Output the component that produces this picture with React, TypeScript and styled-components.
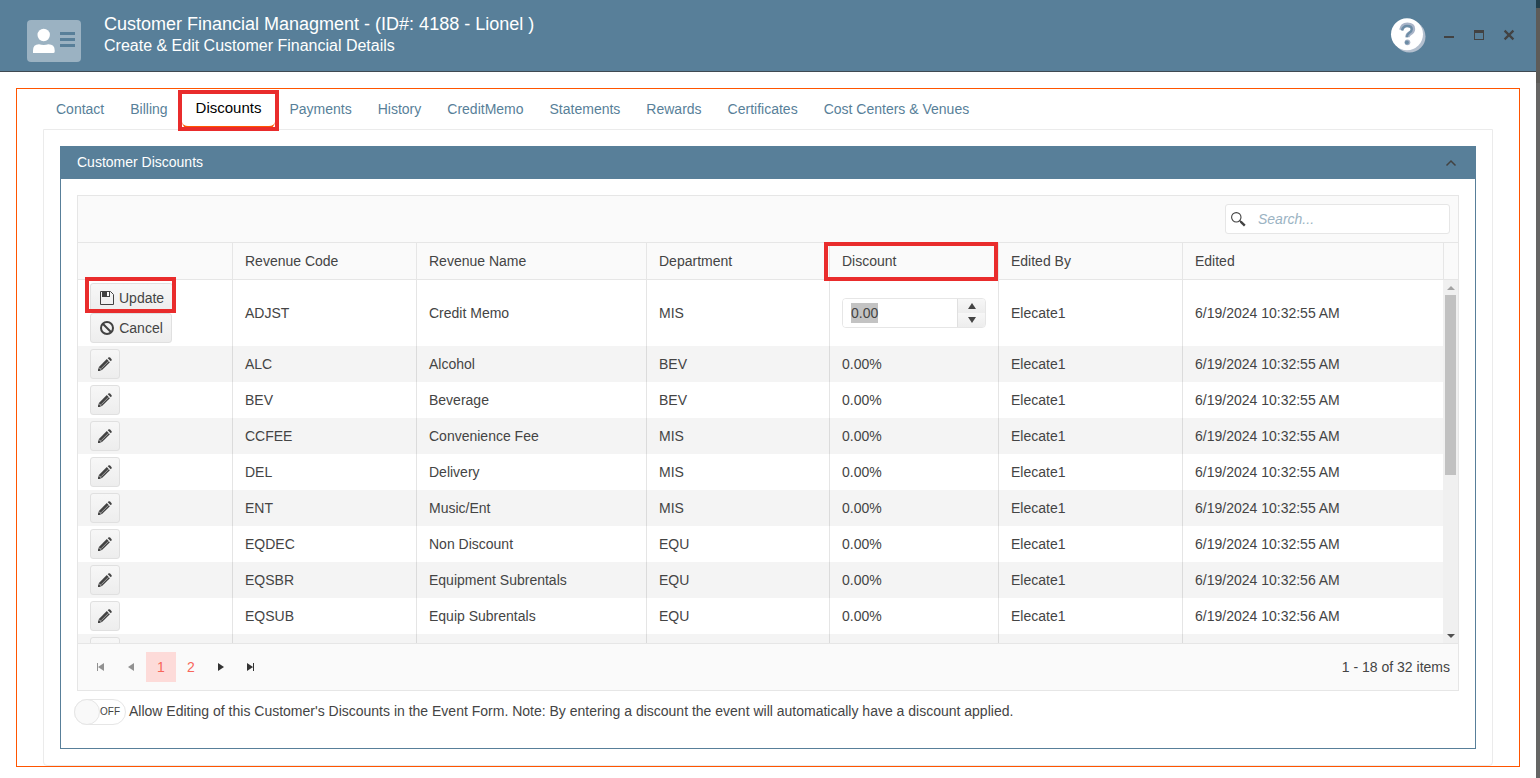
import React, { useEffect, useRef } from "react";
import styled, { createGlobalStyle, css } from "styled-components";

const steel = "#587f99";
const line = "#e6e6e6";
const ink = "#444444";
const accent = "#ff5500";
const marker = "#e92c2c";

const GlobalStyle = createGlobalStyle`
  * { box-sizing: border-box; }
  html, body { margin: 0; padding: 0; }
  body {
    background: #656564;
    color: ${ink};
    font-family: "Liberation Sans", Arial, Helvetica, sans-serif;
    font-size: 14px;
    line-height: 20px;
  }
  button, input { font: inherit; color: inherit; margin: 0; }
`;

const Backdrop = styled.div`
  padding-right: 4px;
  background: linear-gradient(#24404d 0 8px, #5d5b58 8px 83px, #666564 83px);
`;

const Dialog = styled.main`
  min-height: 100vh;
  background: #fff;
`;

const TitleBar = styled.header`
  display: flex;
  align-items: flex-start;
  min-height: 72px;
  padding: 14px 12px 9px 27px;
  background: ${steel};
  border-bottom: 1px solid #3f4a52;
  color: #fff;
`;

const BadgeIcon = styled.svg`
  flex: none;
  margin-top: 6px;
  margin-right: 23px;
`;

const TitleText = styled.div`
  flex: 1;
`;

const Title = styled.h1`
  margin: 0;
  font-size: 18px;
  font-weight: 400;
  line-height: 21px;
`;

const Subtitle = styled.p`
  margin: 0;
  font-size: 16px;
  line-height: 21px;
`;

const WindowActions = styled.div`
  display: flex;
  align-items: center;
  height: 42px;
`;

const IconButton = styled.button`
  display: flex;
  align-items: center;
  justify-content: center;
  width: 30px;
  height: 30px;
  padding: 0;
  border: 0;
  background: none;
  color: #424242;
`;

const HelpButton = styled(IconButton)`
  width: 36px;
  height: 36px;
  margin-right: 8px;
`;

const Content = styled.div`
  padding: 16px 16px 11px;
`;

const Frame = styled.section`
  border: 1px solid ${accent};
  padding: 0 26px;
`;

const Tabs = styled.nav`
  display: flex;
  align-items: center;
  height: 40px;
`;

const Tab = styled.button<{ $active?: boolean }>`
  position: relative;
  height: 38px;
  padding: 0 13px;
  border: 0;
  background: none;
  color: ${(p) => (p.$active ? "#000" : steel)};
  ${(p) =>
    p.$active &&
    css`
      margin: 0 1px;
      padding: 0 14px;
      border: solid ${accent};
      border-width: 0 0 2px;
      border-radius: 6px;
      font-size: 15px;
    `}
`;

const Highlight = styled.span<{ $inset: string }>`
  position: absolute;
  inset: ${(p) => p.$inset};
  z-index: 2;
  border: 4px solid ${marker};
  pointer-events: none;
`;

const TabBody = styled.div`
  padding: 16px;
  border: 1px solid #ebebeb;
  border-radius: 0 0 4px 4px;
`;

const Panel = styled.section`
  border: 1px solid ${steel};
`;

const PanelHeader = styled.header`
  display: flex;
  align-items: center;
  justify-content: space-between;
  height: 32px;
  padding: 0 9px 0 16px;
  background: ${steel};
  color: #fff;
`;

const PanelTitle = styled.h2`
  margin: 0;
  padding-bottom: 2px;
  font-size: 14px;
  font-weight: 400;
`;

const PanelBody = styled.div`
  padding: 16px 16px 23px;
`;

const Grid = styled.div`
  border: 1px solid ${line};
`;

const Toolbar = styled.div`
  display: flex;
  justify-content: flex-end;
  padding: 8px;
  background: #fafafa;
`;

const SearchBox = styled.label`
  display: flex;
  align-items: center;
  gap: 12px;
  width: 225px;
  height: 30px;
  padding: 0 5px;
  border: 1px solid ${line};
  border-radius: 3px;
  background: #fff;
`;

const SearchInput = styled.input`
  flex: 1;
  min-width: 0;
  padding: 0;
  border: 0;
  outline: 0;
  background: none;
  &::placeholder {
    color: #9bb3c3;
    font-style: italic;
    opacity: 1;
  }
`;

const Viewport = styled.div`
  display: flex;
  height: 401px;
`;

const TableClip = styled.div`
  flex: 1;
  overflow: hidden;
`;

const Table = styled.table`
  width: 100%;
  table-layout: fixed;
  border-collapse: separate;
  border-spacing: 0;
`;

const HeadCell = styled.th`
  position: relative;
  height: 38px;
  padding: 0 12px;
  border: solid ${line};
  border-width: 1px 0 1px 1px;
  background: #fafafa;
  font-weight: 400;
  text-align: left;
  &:first-child {
    border-left: 0;
  }
`;

const Row = styled.tr<{ $striped?: boolean }>`
  background: ${(p) => (p.$striped ? "#f4f4f4" : "#fff")};
`;

const Cell = styled.td`
  height: 36px;
  padding: 3px 12px;
  border-left: 1px solid rgba(0, 0, 0, 0.1);
  white-space: nowrap;
  &:first-child {
    border-left: 0;
  }
`;

const CommandStack = styled.div`
  display: flex;
  flex-direction: column;
  align-items: flex-start;
`;

const CommandSlot = styled.div`
  position: relative;
`;

const Command = styled.button<{ $square?: boolean }>`
  display: flex;
  align-items: center;
  justify-content: center;
  gap: 4px;
  min-width: ${(p) => (p.$square ? "30px" : "82px")};
  height: 30px;
  padding: ${(p) => (p.$square ? "0" : "0 8px")};
  border: 1px solid #e0e0e0;
  border-radius: 3px;
  background: linear-gradient(#f7f7f7, #ededed);
`;

const Numeric = styled.div`
  display: flex;
  height: 30px;
  border: 1px solid ${line};
  border-radius: 4px;
  overflow: hidden;
  background: #fff;
`;

const NumericInput = styled.input`
  flex: 1;
  min-width: 0;
  padding: 4px 8px;
  border: 0;
  outline: 0;
  line-height: 20px;
  &::selection {
    background: #c3c3c3;
    color: ${ink};
  }
`;

const Steppers = styled.div`
  display: flex;
  flex-direction: column;
  width: 28px;
  border-left: 1px solid #e0e0e0;
`;

const Stepper = styled.button`
  display: flex;
  flex: 1;
  align-items: center;
  justify-content: center;
  padding: 0;
  border: 0;
  background: linear-gradient(#f7f7f7, #ededed);
`;

const ScrollColumn = styled.div`
  display: flex;
  flex-direction: column;
  width: 15px;
`;

const ScrollHead = styled.div`
  height: 38px;
  border: solid ${line};
  border-width: 1px 0 1px 1px;
  background: #fafafa;
`;

const Track = styled.div`
  display: flex;
  flex: 1;
  flex-direction: column;
  align-items: center;
  background: #f0f0f0;
`;

const TrackArrow = styled.span`
  display: flex;
  align-items: center;
  justify-content: center;
  height: 15px;
`;

const TrackRun = styled.div`
  flex: 1;
  width: 11px;
`;

const Thumb = styled.div`
  height: 54%;
  background: #c1c1c1;
`;

const Pager = styled.footer`
  display: flex;
  align-items: center;
  justify-content: space-between;
  padding: 8px;
  border-top: 1px solid ${line};
  background: #fafafa;
`;

const PageList = styled.div`
  display: flex;
`;

const PageButton = styled.button<{ $current?: boolean; $dim?: boolean }>`
  display: flex;
  align-items: center;
  justify-content: center;
  width: 30px;
  height: 30px;
  padding: 0;
  border: 0;
  background: ${(p) => (p.$current ? "#fddbd9" : "none")};
  color: ${(p) => (p.$dim ? "#919191" : "#333")};
`;

const PageNumber = styled(PageButton)`
  color: #f8665a;
`;

const SwitchRow = styled.label`
  display: flex;
  align-items: center;
  gap: 3px;
  margin: 8px 0 0 -3px;
`;

const Switch = styled.span`
  position: relative;
  display: flex;
  align-items: center;
  flex: none;
  width: 52px;
  height: 26px;
  border: 1px solid ${line};
  border-radius: 13px;
  background: #fff;
`;

const SwitchInput = styled.input`
  position: absolute;
  inset: 0;
  width: 100%;
  height: 100%;
  opacity: 0;
`;

const Knob = styled.span`
  width: 26px;
  height: 26px;
  margin-left: -1px;
  border: 1px solid ${line};
  border-radius: 50%;
  background: #f9f9f9;
`;

const SwitchState = styled.span`
  font-size: 10px;
  line-height: 16px;
`;

const SwitchText = styled.span`
  padding-bottom: 2px;
`;

const PencilIcon = () => (
  <svg width="16" height="16" viewBox="0 0 16 16" aria-hidden="true">
    <path d="M1 15l.9-4L9.800 3.100l3.100 3.100L5 14.100z" fill="#424242" />
    <path d="M10.700 2.200l.7-.7q.8-.7 1.700.1l1.300 1.300q.8.900.1 1.700l-.7.7z" fill="#424242" />
    <path d="M4.200 12.600l7.500-7.500" stroke="#a8a8a8" strokeWidth="1" />
    <path d="M2.500 11.200l2.300 2.300-1.700.4-1-1z" fill="#9a9a9a" />
    <path d="M1 15l.6-2.600 2 2z" fill="#333" />
  </svg>
);

const SaveIcon = () => (
  <svg width="16" height="16" viewBox="0 0 16 16" fill="none" aria-hidden="true">
    <path d="M1.5 1.5h10l3 3v10h-13z" stroke="#424242" />
    <path d="M3 1h8v6H3z" fill="#424242" />
    <path d="M8 2h2v4H8z" fill="#fff" />
  </svg>
);

const CancelIcon = () => (
  <svg width="16" height="16" viewBox="0 0 16 16" fill="none" stroke="#424242" strokeWidth="2" aria-hidden="true">
    <circle cx="8" cy="8" r="6" />
    <path d="M3.8 3.8l8.4 8.4" />
  </svg>
);

const SearchIcon = () => (
  <svg width="15" height="15" viewBox="0 0 15 15" fill="none" stroke="#424242" aria-hidden="true">
    <circle cx="5.3" cy="5.3" r="4.7" strokeWidth="1.1" />
    <path d="M8.6 8.6l1.5 1.5" strokeWidth="1.4" />
    <path d="M9.7 9.7l4.1 4" strokeWidth="2.4" />
  </svg>
);

const Triangle = ({ d, w = 16, h = 16 }: { d: string; w?: number; h?: number }) => (
  <svg width={w} height={h} viewBox={`0 0 ${w} ${h}`} fill="currentColor" aria-hidden="true">
    <path d={d} />
  </svg>
);

const tabs = [
  "Contact",
  "Billing",
  "Discounts",
  "Payments",
  "History",
  "CreditMemo",
  "Statements",
  "Rewards",
  "Certificates",
  "Cost Centers & Venues",
];

const columns = [
  { name: "", width: 154 },
  { name: "Revenue Code", width: 184 },
  { name: "Revenue Name", width: 230 },
  { name: "Department", width: 183 },
  { name: "Discount", width: 169 },
  { name: "Edited By", width: 184 },
  { name: "Edited" },
];

const rows = [
  ["ALC", "Alcohol", "BEV", "0.00%", "Elecate1", "6/19/2024 10:32:55 AM"],
  ["BEV", "Beverage", "BEV", "0.00%", "Elecate1", "6/19/2024 10:32:55 AM"],
  ["CCFEE", "Convenience Fee", "MIS", "0.00%", "Elecate1", "6/19/2024 10:32:55 AM"],
  ["DEL", "Delivery", "MIS", "0.00%", "Elecate1", "6/19/2024 10:32:55 AM"],
  ["ENT", "Music/Ent", "MIS", "0.00%", "Elecate1", "6/19/2024 10:32:55 AM"],
  ["EQDEC", "Non Discount", "EQU", "0.00%", "Elecate1", "6/19/2024 10:32:55 AM"],
  ["EQSBR", "Equipment Subrentals", "EQU", "0.00%", "Elecate1", "6/19/2024 10:32:56 AM"],
  ["EQSUB", "Equip Subrentals", "EQU", "0.00%", "Elecate1", "6/19/2024 10:32:56 AM"],
  ["", "", "", "", "", ""],
];

const EditRow = () => {
  const field = useRef<HTMLInputElement>(null);
  useEffect(() => {
    field.current?.focus();
    field.current?.select();
  }, []);
  return (
    <Row>
      <Cell>
        <CommandStack>
          <CommandSlot>
            <Command type="button">
              <SaveIcon />
              Update
            </Command>
            <Highlight $inset="-6px -3px 0 -5px" />
          </CommandSlot>
          <Command type="button">
            <CancelIcon />
            Cancel
          </Command>
        </CommandStack>
      </Cell>
      <Cell>ADJST</Cell>
      <Cell>Credit Memo</Cell>
      <Cell>MIS</Cell>
      <Cell>
        <Numeric>
          <NumericInput ref={field} defaultValue="0.00" aria-label="Discount" />
          <Steppers>
            <Stepper type="button" aria-label="Increase value">
              <Triangle d="M4 0l4 6H0z" w={8} h={6} />
            </Stepper>
            <Stepper type="button" aria-label="Decrease value">
              <Triangle d="M0 0h8L4 6z" w={8} h={6} />
            </Stepper>
          </Steppers>
        </Numeric>
      </Cell>
      <Cell>Elecate1</Cell>
      <Cell>6/19/2024 10:32:55 AM</Cell>
    </Row>
  );
};

export default function App() {
  return (
    <Backdrop>
      <GlobalStyle />
      <Dialog>
        <TitleBar>
          <BadgeIcon width="54" height="42" viewBox="0 0 54 42" aria-hidden="true">
            <rect width="54" height="42" rx="4" fill="#9bb2c2" />
            <circle cx="16.7" cy="15" r="6.2" fill="#fff" />
            <path d="M6 33v-2.5q0-6.3 6-6.3 4.7 1.6 9.400 0 6.3 0 6.3 6.3V31.5q0 1.5-1.500 1.500z" fill="#fff" />
            <path d="M33 13.5h15M33 19.5h15M33 25.5h15" stroke={steel} strokeWidth="3" />
          </BadgeIcon>
          <TitleText>
            <Title>Customer Financial Managment - (ID#: 4188 - Lionel )</Title>
            <Subtitle>Create &amp; Edit Customer Financial Details</Subtitle>
          </TitleText>
          <WindowActions>
            <HelpButton type="button" aria-label="Help">
              <svg width="36" height="36" viewBox="0 0 36 36" fill="none" aria-hidden="true">
                <circle cx="19.5" cy="19.5" r="16" fill="#b3bfce" />
                <circle cx="17" cy="17.3" r="16" fill="#fff" />
                <path d="M11.3 13q1-5.300 6-5.300 5.700 0 5.700 4.300 0 2.600-3 4.200-2.600 1.400-2.600 4" stroke="#a9b4c8" strokeWidth="4.400" />
                <path d="M12 13.600q1-4.600 5-4.600 4.800 0 4.800 3.200 0 2.200-2.700 3.800-2.200 1.400-2.200 4.200" stroke="#6d8da6" strokeWidth="2.400" />
                <circle cx="17.4" cy="25.300" r="2.900" fill="#a9b4c8" />
                <circle cx="16.9" cy="25.600" r="2" fill="#6d8da6" />
              </svg>
            </HelpButton>
            <IconButton type="button" aria-label="Minimize">
              <Triangle d="M3 9h10v2H3z" />
            </IconButton>
            <IconButton type="button" aria-label="Maximize">
              <Triangle d="M3 3h10v10H3zM4 6v6h8V6z" />
            </IconButton>
            <IconButton type="button" aria-label="Close">
              <svg width="16" height="16" viewBox="0 0 16 16" stroke="currentColor" strokeWidth="2.2" aria-hidden="true">
                <path d="M3.6 3.6l8.8 8.8M12.4 3.6l-8.8 8.8" />
              </svg>
            </IconButton>
          </WindowActions>
        </TitleBar>
        <Content>
          <Frame>
            <Tabs>
              {tabs.map((name) => (
                <Tab key={name} type="button" $active={name === "Discounts"}>
                  {name}
                  {name === "Discounts" && <Highlight $inset="0 -4px -5px -4px" />}
                </Tab>
              ))}
            </Tabs>
            <TabBody>
              <Panel>
                <PanelHeader>
                  <PanelTitle>Customer Discounts</PanelTitle>
                  <IconButton type="button" aria-label="Collapse panel">
                    <svg width="16" height="16" viewBox="0 0 16 16" fill="none" stroke="currentColor" strokeWidth="1.5" aria-hidden="true">
                      <path d="M3.5 10.500L8 6l4.500 4.500" />
                    </svg>
                  </IconButton>
                </PanelHeader>
                <PanelBody>
                  <Grid>
                    <Toolbar>
                      <SearchBox>
                        <SearchIcon />
                        <SearchInput type="text" placeholder="Search..." aria-label="Search" />
                      </SearchBox>
                    </Toolbar>
                    <Viewport>
                      <TableClip>
                        <Table>
                          <colgroup>
                            {columns.map((c) => (
                              <col key={c.name} width={c.width} />
                            ))}
                          </colgroup>
                          <thead>
                            <tr>
                              {columns.map((c) => (
                                <HeadCell key={c.name} scope="col">
                                  {c.name}
                                  {c.name === "Discount" && <Highlight $inset="-1px 0 -2px -6px" />}
                                </HeadCell>
                              ))}
                            </tr>
                          </thead>
                          <tbody>
                            <EditRow />
                            {rows.map((cells, i) => (
                              <Row key={i} $striped={i % 2 === 0}>
                                <Cell>
                                  <Command type="button" $square aria-label={`Edit ${cells[0]}`}>
                                    <PencilIcon />
                                  </Command>
                                </Cell>
                                {cells.map((text, j) => (
                                  <Cell key={j}>{text}</Cell>
                                ))}
                              </Row>
                            ))}
                          </tbody>
                        </Table>
                      </TableClip>
                      <ScrollColumn>
                        <ScrollHead />
                        <Track>
                          <TrackArrow>
                            <svg width="8" height="4" viewBox="0 0 8 4" aria-hidden="true">
                              <path d="M4 0l4 4H0z" fill="#a3a3a3" />
                            </svg>
                          </TrackArrow>
                          <TrackRun>
                            <Thumb />
                          </TrackRun>
                          <TrackArrow>
                            <svg width="8" height="4" viewBox="0 0 8 4" aria-hidden="true">
                              <path d="M0 0h8L4 4z" fill="#505050" />
                            </svg>
                          </TrackArrow>
                        </Track>
                      </ScrollColumn>
                    </Viewport>
                    <Pager>
                      <PageList>
                        <PageButton type="button" $dim aria-label="First page">
                          <Triangle d="M4 4h1v8H4zM11 4v8L5 8z" />
                        </PageButton>
                        <PageButton type="button" $dim aria-label="Previous page">
                          <Triangle d="M11 4v8L5 8z" />
                        </PageButton>
                        <PageNumber type="button" $current>
                          1
                        </PageNumber>
                        <PageNumber type="button">2</PageNumber>
                        <PageButton type="button" aria-label="Next page">
                          <Triangle d="M5 4v8l6-4z" />
                        </PageButton>
                        <PageButton type="button" aria-label="Last page">
                          <Triangle d="M4 4v8l6-4zM10 4h1v8h-1z" />
                        </PageButton>
                      </PageList>
                      <span>1 - 18 of 32 items</span>
                    </Pager>
                  </Grid>
                  <SwitchRow>
                    <Switch>
                      <SwitchInput type="checkbox" role="switch" />
                      <Knob />
                      <SwitchState>OFF</SwitchState>
                    </Switch>
                    <SwitchText>
                      Allow Editing of this Customer's Discounts in the Event Form. Note: By entering a discount the event
                      will automatically have a discount applied.
                    </SwitchText>
                  </SwitchRow>
                </PanelBody>
              </Panel>
            </TabBody>
          </Frame>
        </Content>
      </Dialog>
    </Backdrop>
  );
}
